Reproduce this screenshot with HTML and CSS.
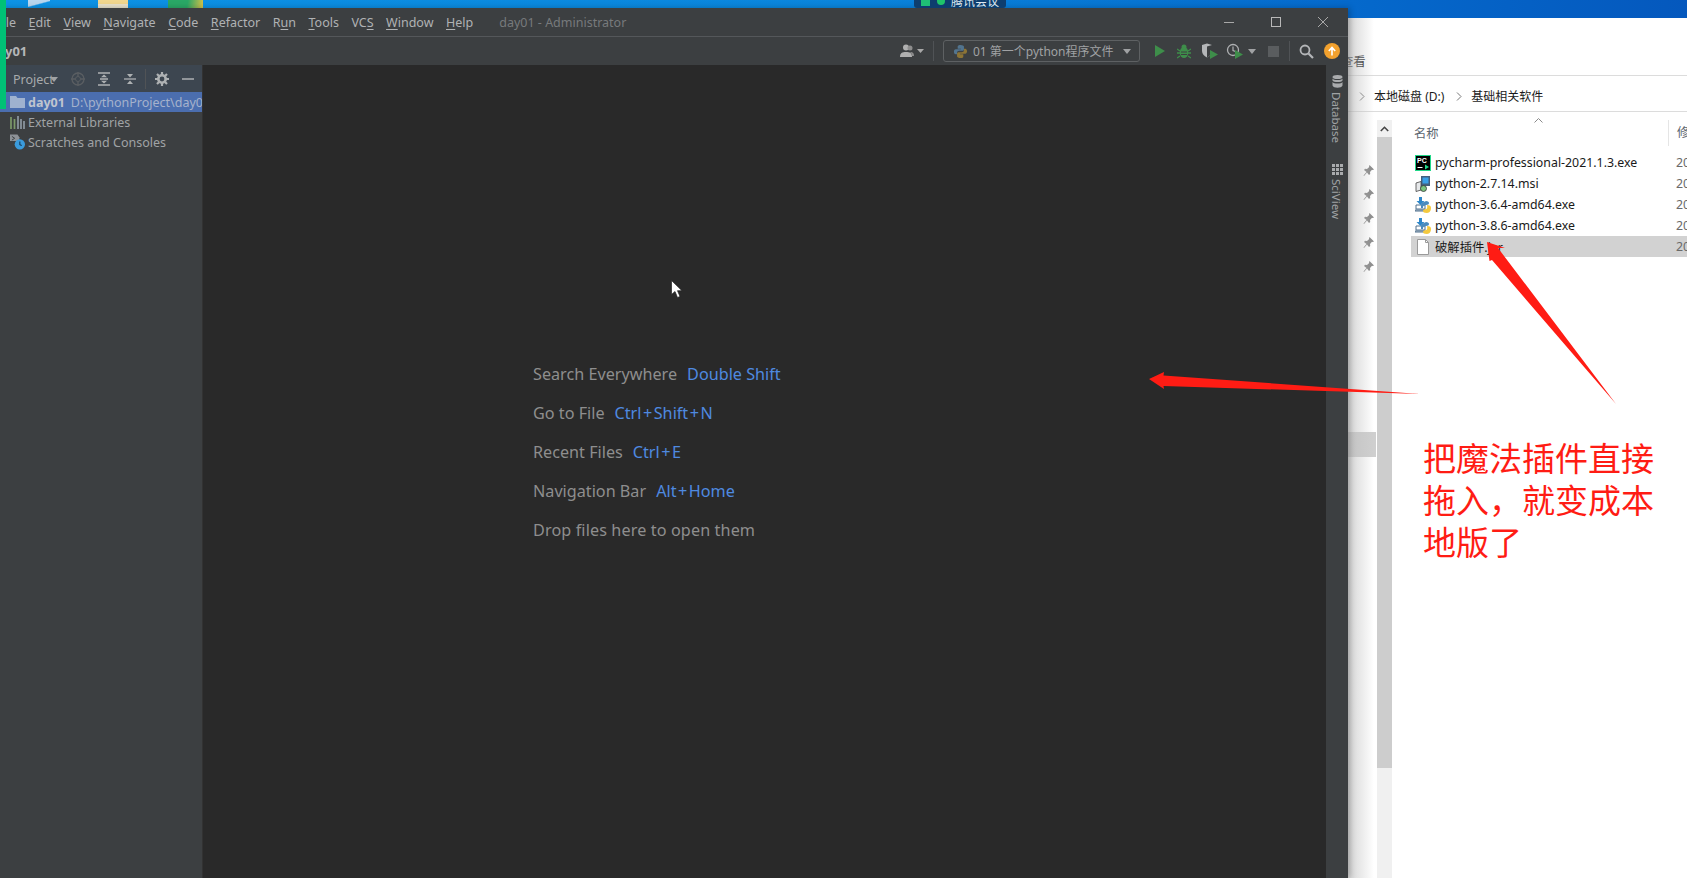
FILE: index.html
```html
<!DOCTYPE html>
<html lang="zh">
<head>
<meta charset="utf-8">
<title>day01 - Administrator</title>
<link rel="stylesheet" href="styles.css">
</head>
<body>
<div class="screen">
  <div class="deskicon di-a"></div>
  <div class="deskicon di-b"></div>
  <div class="deskicon di-c"></div>

  <div class="windows">
    <section class="ide">
      <header class="titlebar">
        <nav class="menu">
          <span>File</span><span><u>E</u>dit</span><span><u>V</u>iew</span><span><u>N</u>avigate</span><span><u>C</u>ode</span><span><u>R</u>efactor</span><span>R<u>u</u>n</span><span><u>T</u>ools</span><span>VC<u>S</u></span><span><u>W</u>indow</span><span><u>H</u>elp</span>
        </nav>
        <div class="wintitle">day01 - Administrator</div>
        <div class="winctl">
          <svg width="47" height="14" viewBox="0 0 47 14"><path d="M18 7.500h10" stroke="#a8a8a8"/></svg>
          <svg width="47" height="14" viewBox="0 0 47 14"><rect x="18.500" y="2.500" width="9" height="9" fill="none" stroke="#b8b8b8"/></svg>
          <svg width="47" height="14" viewBox="0 0 47 14"><path d="M18 2l10 10M28 2L18 12" stroke="#a8a8a8" fill="none"/></svg>
        </div>
      </header>
      <div class="toolbar">
        <div class="crumb">day01</div>
        <div class="tools">
          <svg class="t-user" width="25" height="16" viewBox="0 0 25 16"><circle cx="6" cy="4.500" r="3" fill="#b0b0b0"/><path d="M0 14c0-4 2-5 6-5s6 1 6 5z" fill="#b0b0b0"/><circle cx="10" cy="5" r="2.500" fill="#8d8d8d"/><path d="M10 9c3 0 4 1 4 4h-2c0-2-1-3-2-4z" fill="#8d8d8d"/><path d="M17 6h7l-3.500 4z" fill="#a8a8a8"/></svg>
          <i class="vsep sep-a"></i>
          <div class="runconf">
            <svg class="pyicon" width="15" height="15" viewBox="0 0 16 16"><path d="M8 1C5 1 5 2.200 5 3v2h3.500v.7H3C1.500 5.700 1 7 1 8.200S1.600 11 3 11h1.300V9.300C4.300 8 5.300 7.200 6.500 7.200H10c1 0 1.700-.7 1.700-1.700V3C11.700 1.800 10 1 8 1z" fill="#52748e"/><path d="M8 15c3 0 3-1.200 3-2v-2H7.500v-.7H13c1.500 0 2-1.300 2-2.500S14.400 5 13 5h-1.300v1.700c0 1.300-1 2.100-2.200 2.100H6c-1 0-1.700.7-1.700 1.700V13c0 1.200 1.700 2 3.700 2z" fill="#8c7436"/></svg>
            <span class="runname">01 第一个python程序文件</span>
            <i class="caret caret-run"></i>
          </div>
          <span class="tbtn t-run"><svg width="12" height="14" viewBox="0 0 12 14"><path d="M1 1l10 6-10 6z" fill="#3e8e4a"/></svg></span>
          <span class="tbtn t-debug"><svg width="14" height="15" viewBox="0 0 14 15"><ellipse cx="7" cy="8.500" rx="4.200" ry="5.500" fill="#3e8e4a"/><circle cx="7" cy="3" r="2.500" fill="#3e8e4a"/><path d="M0 5l3 2M14 5l-3 2M0 9h3M14 9h-3M0 14l3-2M14 14l-3-2" stroke="#3e8e4a" stroke-width="1.300"/><path d="M4 8h6M4 10.500h6" stroke="#3c3f41"/></svg></span>
          <span class="tbtn t-cov"><svg width="17" height="16" viewBox="0 0 17 16"><path d="M1 2l5-1.500L11 2v6c0 3-2 5-5 6.500C3 13 1 11 1 8z" fill="#b4b6b8"/><path d="M6 3.500L11 2v6c0 3-2 5-5 6.500z" fill="#3c3f41"/><path d="M9 7l8 4.500L9 16z" fill="#3e8e4a"/></svg></span>
          <span class="tbtn t-prof"><svg width="18" height="16" viewBox="0 0 18 16"><circle cx="7" cy="7" r="5.500" fill="none" stroke="#aeb0b2" stroke-width="1.300"/><path d="M7 3.500V7.500l2.500 1" fill="none" stroke="#aeb0b2" stroke-width="1.200"/><path d="M9 7l8 4.500L9 16z" fill="#3e8e4a"/></svg></span>
          <i class="caret caret-prof"></i>
          <span class="tbtn t-stop"><i class="stopbox"></i></span>
          <i class="vsep sep-b"></i>
          <span class="tbtn t-search"><svg width="15" height="15" viewBox="0 0 15 15"><circle cx="6" cy="6" r="4.500" fill="none" stroke="#b4b6b8" stroke-width="1.800"/><path d="M9.500 9.500L14 14" stroke="#b4b6b8" stroke-width="2.200"/></svg></span>
          <span class="tbtn t-update"><svg width="16" height="16" viewBox="0 0 16 16"><circle cx="8" cy="8" r="8" fill="#f2a12e"/><path d="M8 12.500V5M4.800 8L8 4.500 11.200 8" fill="none" stroke="#fff" stroke-width="1.600"/></svg></span>
        </div>
      </div>
      <div class="idebody">
        <aside class="sidebar">
          <div class="sidehead">
            <span class="projname">Project</span><i class="caret caret-proj"></i>
            <span class="hbtn h-first"><svg width="14" height="14" viewBox="0 0 14 14"><circle cx="7" cy="7" r="6" fill="none" stroke="#5a5e62" stroke-width="1.300"/><circle cx="7" cy="7" r="2.500" fill="none" stroke="#5a5e62"/><path d="M7 0v4M7 10v4M0 7h4M10 7h4" stroke="#5a5e62" stroke-width="1.300"/></svg></span>
            <span class="hbtn"><svg width="14" height="14" viewBox="0 0 14 14"><path d="M1 1h12M1 13h12M3 7h8" stroke="#aeb1b3" stroke-width="1.300"/><path d="M7 2.500l3 2.800H4zM7 11.500l3-2.800H4z" fill="#aeb1b3"/></svg></span>
            <span class="hbtn"><svg width="14" height="14" viewBox="0 0 14 14"><path d="M1 7h12" stroke="#aeb1b3" stroke-width="1.300"/><path d="M7 5.500l3-3.500H4zM7 8.500l3 3.500H4z" fill="#aeb1b3"/></svg></span>
            <i class="vsep sep-c"></i>
            <span class="hbtn"><svg width="14" height="14" viewBox="0 0 14 14"><circle cx="7" cy="7" r="3.700" fill="none" stroke="#aeb1b3" stroke-width="2.600"/><path d="M7 0v3M7 11v3M0 7h3M11 7h3M2 2l2 2M10 10l2 2M12 2l-2 2M4 10l-2 2" stroke="#aeb1b3" stroke-width="2.200"/></svg></span>
            <span class="hbtn"><svg width="14" height="14" viewBox="0 0 14 14"><path d="M1 7h12" stroke="#aeb1b3" stroke-width="1.500"/></svg></span>
          </div>
          <div class="treerow selected">
            <svg class="ticon" width="15" height="12" viewBox="0 0 15 12"><path d="M0 0h6l1.500 2H15v10H0z" fill="#9fb2cf"/></svg>
            <b class="tname">day01</b><span class="tpath">D:\pythonProject\day01</span>
          </div>
          <div class="treerow">
            <svg class="ticon" width="15" height="13" viewBox="0 0 15 13"><path d="M1 1v12" stroke="#7d9a6a" stroke-width="1.700"/><path d="M4.500 3v10" stroke="#7d9a6a" stroke-width="1.700"/><path d="M8 0v13" stroke="#8e99a3" stroke-width="1.700"/><path d="M11 3v10" stroke="#8e99a3" stroke-width="1.700"/><path d="M14 5v8" stroke="#8e99a3" stroke-width="1.700"/></svg>
            <span>External Libraries</span>
          </div>
          <div class="treerow">
            <svg class="ticon" width="16" height="16" viewBox="0 0 16 16"><path d="M0 0h8l2 3v4H0z" fill="#8d9297"/><path d="M2 2l3 2-3 2" fill="none" stroke="#3c3f41"/><circle cx="10.500" cy="10.500" r="5.500" fill="#3a9bdc"/><path d="M10.500 7.500v3.300l2 1" fill="none" stroke="#12344f" stroke-width="1.100"/></svg>
            <span>Scratches and Consoles</span>
          </div>
        </aside>
        <main class="editor">
          <p><span class="hk">Search Everywhere</span><span class="key">Double Shift</span></p>
          <p><span class="hk">Go to File</span><span class="key">Ctrl<span class="plus">+</span>Shift<span class="plus">+</span>N</span></p>
          <p><span class="hk">Recent Files</span><span class="key">Ctrl<span class="plus">+</span>E</span></p>
          <p><span class="hk">Navigation Bar</span><span class="key">Alt<span class="plus">+</span>Home</span></p>
          <p><span class="hk hk-drop">Drop files here to open them</span></p>
        </main>
        <aside class="strip">
          <svg width="11" height="13" viewBox="0 0 11 13"><ellipse cx="5.500" cy="2" rx="5" ry="2" fill="#a9abad"/><path d="M.5 3.500c1 2 9 2 10 0v2c-1 2-9 2-10 0zM.5 7c1 2 9 2 10 0v3.500c-1 3-9 3-10 0z" fill="#a9abad"/></svg>
          <span class="striptext">Database</span>
          <svg class="sci" width="11" height="11" viewBox="0 0 11 11"><path d="M0 0h3v3H0zM4 0h3v3H4zM8 0h3v3H8zM0 4h3v3H0zM4 4h3v3H4zM8 4h3v3H8zM0 8h3v3H0zM4 8h3v3H4zM8 8h3v3H8z" fill="#a9abad"/></svg>
          <span class="striptext">SciView</span>
        </aside>
      </div>
    </section>

    <section class="explorer">
      <div class="ribbon"><span>查看</span></div>
      <div class="address">
        <span class="addr-prev">此电脑</span>
        <svg class="chev" width="6" height="9" viewBox="0 0 6 9"><path d="M1 .5l4 4-4 4" fill="none" stroke="#777"/></svg>
        <span>本地磁盘 (D:)</span>
        <svg class="chev" width="6" height="9" viewBox="0 0 6 9"><path d="M1 .5l4 4-4 4" fill="none" stroke="#777"/></svg>
        <span>基础相关软件</span>
      </div>
      <div class="expbody">
        <div class="navpane">
          <div class="pin"><svg width="11" height="11" viewBox="0 0 11 11"><use href="#pin"/></svg></div>
          <div class="pin"><svg width="11" height="11" viewBox="0 0 11 11"><use href="#pin"/></svg></div>
          <div class="pin"><svg width="11" height="11" viewBox="0 0 11 11"><use href="#pin"/></svg></div>
          <div class="pin"><svg width="11" height="11" viewBox="0 0 11 11"><use href="#pin"/></svg></div>
          <div class="pin"><svg width="11" height="11" viewBox="0 0 11 11"><use href="#pin"/></svg></div>
          <div class="navsel"></div>
        </div>
        <div class="scrollbar">
          <div class="sbtn"><svg width="9" height="6" viewBox="0 0 9 6"><path d="M.8 5l3.700-3.700L8.200 5" fill="none" stroke="#444" stroke-width="1.600"/></svg></div>
          <div class="thumb"></div>
        </div>
        <div class="files">
          <svg class="sortcaret" width="9" height="5" viewBox="0 0 9 5"><path d="M.5 4.500l4-4 4 4" fill="none" stroke="#8a8a8a"/></svg>
          <div class="colhead"><span class="col-name">名称</span><span class="col-date">修</span></div>
          <div class="frow">
            <svg class="ficon" width="16" height="16" viewBox="0 0 16 16"><rect width="16" height="16" fill="#21d789"/><rect x="1" y="1" width="14" height="14" fill="#000"/><text x="2" y="8" class="pc">PC</text><path d="M2.500 12.500h5" stroke="#fff"/><path d="M10 9.500l4 2.500-4 2.500z" fill="#21d789"/></svg>
            <span class="fname">pycharm-professional-2021.1.3.exe</span><span class="fdate">20</span>
          </div>
          <div class="frow">
            <svg class="ficon" width="16" height="16" viewBox="0 0 16 16"><rect x="6" y="0" width="9" height="10" fill="#44607f"/><rect x="7.500" y="1.500" width="6" height="6" fill="#3ba0e8"/><path d="M1 7l5-1.500V14l-5 1.500z" fill="#e6e8ea" stroke="#444" stroke-width=".8"/><circle cx="8.500" cy="12.500" r="3" fill="#7bc47f" stroke="#333" stroke-width=".8"/></svg>
            <span class="fname">python-2.7.14.msi</span><span class="fdate">20</span>
          </div>
          <div class="frow">
            <svg class="ficon" width="16" height="16" viewBox="0 0 16 16"><use href="#pyinst"/></svg>
            <span class="fname">python-3.6.4-amd64.exe</span><span class="fdate">20</span>
          </div>
          <div class="frow">
            <svg class="ficon" width="16" height="16" viewBox="0 0 16 16"><use href="#pyinst"/></svg>
            <span class="fname">python-3.8.6-amd64.exe</span><span class="fdate">20</span>
          </div>
          <div class="frow frow-sel">
            <svg class="ficon" width="16" height="16" viewBox="0 0 16 16"><path d="M2.500.5h8l3 3v12h-11z" fill="#fff" stroke="#9a9a9a"/><path d="M10.500.5v3h3" fill="none" stroke="#9a9a9a"/></svg>
            <span class="fname">破解插件.jar</span><span class="fdate">20</span>
          </div>
        </div>
      </div>
    </section>
  </div>

  <div class="greenbar"></div>
  <div class="meeting"><i class="mbars"></i><i class="mdot"></i><span>腾讯会议</span></div>
  <svg class="mouse" width="12" height="18" viewBox="0 0 12 18"><path d="M.5.5v14l3.500-3 2.500 6 2.500-1-2.500-5.800H11z" fill="#fff" stroke="#222" stroke-width=".7"/></svg>
  <svg class="arrows" width="1687" height="878" viewBox="0 0 1687 878">
    <path d="M1149 379l15-7-.5 3.500 256.500 18.500-256.500-8 .5 3z" fill="#ff1c14"/>
    <path d="M1487 242l18 6-7 0 118 156-124-144-2.500 1z" fill="#ff1c14"/>
  </svg>
  <div class="note">把魔法插件直接<br>拖入，就变成本<br>地版了</div>

  <svg class="defs" width="0" height="0">
    <defs>
      <symbol id="pin" viewBox="0 0 11 11"><path d="M6.500 0L11 4.500 9.800 5 9 4.800 7 7l.2 2L6 10 4 7.500 1 11 .5 10.500 3.500 7 1 5l1-1.200 2 .2L6.200 2 6 1.200z" fill="#8a8a8a"/></symbol>
      <symbol id="pyinst" viewBox="0 0 16 16"><path d="M1 8h9v4H1zM0 13h10v1H0z" fill="none" stroke="#51708e"/><path d="M4 0h3v4h2.500L5.500 8 1.500 4H4z" fill="#2e86c8"/><path d="M11 4c2 0 3 1 3 2s-1 2-3 2-3 1-3 2v1H6V8c0-2 2-3 3-3z" fill="#4b8bbe"/><path d="M12 8c3 0 4 1 4 3s-1 5-4 5-4-1-4-2 1-2 3-2 1-4 1-4z" fill="#f4c93f"/></symbol>
    </defs>
  </svg>
</div>
</body>
</html>
```
FILE: styles.css
```css
* { box-sizing: border-box; }
html, body { margin: 0; height: 100%; overflow: hidden; }
body { font-family: "Noto Sans", "Noto Sans CJK SC", sans-serif; }

.screen {
  position: relative;
  width: 1687px;
  height: 878px;
  overflow: hidden;
  background: linear-gradient(90deg, #0d93e6 0%, #0a85dc 50%, #0569cc 80%, #0558bd 100%);
}

.deskicon { position: absolute; top: 0; height: 8px; }
.di-a { left: 28px; width: 22px; background: linear-gradient(165deg, #b9d6ee 45%, transparent 55%); }
.di-b { left: 98px; width: 30px; background: linear-gradient(#f0d68e 50%, #e8e2cc 50%); }
.di-c { left: 168px; width: 35px; background: linear-gradient(100deg, #2aa866 55%, #d8c24a 100%); }

.windows { display: flex; height: 100%; align-items: flex-start; }

/* IDE window */
.ide {
  position: relative;
  z-index: 2;
  flex: 0 0 1348px;
  height: 870px;
  margin-top: 8px;
  background: #3c3f41;
  display: flex;
  flex-direction: column;
  overflow: hidden;
  color: #a8abad;
  box-shadow: 2px 0 6px rgba(0, 0, 0, .25);
}

.titlebar {
  flex: 0 0 29px;
  display: flex;
  align-items: center;
  border-bottom: 1px solid #54575a;
  font-size: 12.5px;
}
.menu { display: flex; gap: 12.5px; margin-left: -4px; color: #b0b2b4; }
.menu u { text-underline-offset: 2px; }
.wintitle { margin-left: 26px; color: #777a7c; }
.winctl { margin-left: auto; display: flex; margin-right: 1px; }

.toolbar {
  flex: 0 0 28px;
  display: flex;
  align-items: center;
  background: #3c3f41;
}
.crumb { margin-left: -11px; font-size: 13px; font-weight: 700; color: #b4b6b8; }
.tools { margin-left: auto; display: flex; align-items: center; padding-right: 5px; }
.t-user { margin-right: 8px; }
.vsep { display: block; width: 1px; height: 20px; background: #505356; }
.sep-a { margin-right: 9px; }
.sep-b { margin: 0 5px; }
.runconf {
  width: 197px;
  height: 22px;
  display: flex;
  align-items: center;
  padding-left: 9px;
  border: 1px solid #5e6163;
  border-radius: 3px;
  margin-right: 8px;
  font-size: 12px;
  color: #a0a2a4;
}
.pyicon { flex: none; }
.runname { margin-left: 5px; white-space: nowrap; }
.caret {
  display: block;
  width: 0;
  height: 0;
  border-left: 4px solid transparent;
  border-right: 4px solid transparent;
  border-top: 5px solid #a0a2a4;
}
.caret-run { margin-left: auto; margin-right: 8px; }
.tbtn { display: flex; align-items: center; justify-content: center; width: 24px; flex: none; }
.t-cov, .t-prof { width: 26px; }
.caret-prof { margin-right: 6px; }
.t-stop, .t-search { width: 22px; }
.t-update { width: 22px; margin-left: 4px; }
.stopbox { display: block; width: 11px; height: 11px; background: #5a5d5f; }

.idebody { flex: 1; display: flex; min-height: 0; border-top: 0; }

.sidebar {
  flex: 0 0 203px;
  overflow: hidden;
  background: #3c3f41;
  font-size: 12.5px;
  border-right: 1px solid #323232;
}
.sidehead {
  height: 27px;
  display: flex;
  align-items: center;
  padding-top: 1px;
  background: #3d4650;
}
.projname { margin-left: 13px; color: #a8abad; }
.caret-proj { margin-left: -4px; }
.hbtn { display: flex; justify-content: center; width: 26px; flex: none; }
.h-first { margin-left: 7px; }
.sep-c { margin: 0 3px 0 2px; }
.treerow {
  display: flex;
  align-items: center;
  height: 20px;
  padding-left: 10px;
  white-space: nowrap;
  color: #a0a3a5;
}
.ticon { flex: none; width: 15px; margin-right: 3px; }
.selected { background: #4b6eaf; color: #c0c5cf; }
.tname { font-weight: 700; margin-right: 6px; }
.tpath { color: #a5b2cc; }

.editor { flex: 1; background: #292929; padding: 290px 0 0 330px; font-size: 16.2px; }
.editor p { margin: 0; height: 39px; line-height: 39px; white-space: nowrap; }
.hk { color: #8e8e8e; }
.hk-drop { letter-spacing: .11px; }
.key { margin-left: 10px; color: #4f8ae0; }
.plus { margin: 0 1.500px; }

.strip {
  flex: 0 0 22px;
  display: flex;
  flex-direction: column;
  align-items: center;
  padding-top: 10px;
  background: #3c3f41;
}
.striptext { writing-mode: vertical-rl; font-size: 11.5px; margin: 4px 2px 0 0; color: #a0a3a5; }
.sci { margin-top: 21px; }

/* Explorer window */
.explorer {
  position: relative;
  flex: 1;
  height: 860px;
  margin-top: 18px;
  background: #fff;
  display: flex;
  flex-direction: column;
  font-size: 12.350px;
  color: #1a1a1a;
}
.explorer::before {
  content: "";
  position: absolute;
  z-index: 1;
  top: 0;
  bottom: 0;
  left: 0;
  width: 26px;
  background: linear-gradient(90deg, rgba(190, 190, 190, .65), rgba(255, 255, 255, 0));
  pointer-events: none;
}
.ribbon {
  flex: 0 0 58px;
  padding: 36px 0 0 0;
  border-bottom: 1px solid #dcdcdc;
  line-height: 16px;
}
.ribbon span { margin-left: -7px; }
.address {
  margin-top: 5px;
  flex: 0 0 31px;
  display: flex;
  align-items: center;
  border-bottom: 1px solid #dcdcdc;
  white-space: nowrap;
  font-size: 12px;
}
.addr-prev { margin-left: -37px; }
.chev { margin: 0 9px 0 12px; }
.expbody { flex: 1; display: flex; min-height: 0; }
.navpane { flex: 0 0 29px; padding-top: 46px; }
.pin { height: 24px; display: flex; align-items: center; justify-content: flex-end; padding-right: 3px; }
.navsel { height: 25px; margin-top: 154px; margin-right: 1px; background: #cfcfcf; }
.scrollbar { flex: 0 0 15px; margin-top: 8px; background: #f0f0f0; }
.sbtn { height: 17px; display: flex; align-items: center; justify-content: center; }
.thumb { height: 631px; background: #cdcdcd; }

.files { position: relative; flex: 1; padding: 8px 0 0 19px; min-width: 0; }
.sortcaret { position: absolute; top: 6px; left: 142px; }
.colhead { display: flex; height: 26px; margin-bottom: 6px; align-items: center; color: #5c6670; }
.col-name { flex: 0 0 257px; padding-left: 3px; }
.col-date { border-left: 1px solid #e5e5e5; padding-left: 8px; height: 26px; line-height: 26px; }
.frow { display: flex; align-items: center; height: 21px; white-space: nowrap; overflow: hidden; }
.frow-sel { background: #d2d2d2; }
.ficon { flex: none; margin: 0 4px 0 4px; }
.fname { flex: 0 0 241px; }
.fdate { color: #6a6a6a; }
.pc { font: 700 7px "Liberation Sans", sans-serif; fill: #fff; }

/* Overlays */
.greenbar { position: absolute; z-index: 3; top: 0; left: 0; width: 6px; height: 109px; background: #00c176; }
.meeting {
  position: absolute;
  z-index: 3;
  top: -6px;
  left: 914px;
  width: 92px;
  height: 14px;
  display: flex;
  align-items: center;
  padding-left: 7px;
  background: #0e3e6e;
  border-radius: 0 0 3px 3px;
  font-size: 12px;
  color: #dfe8f0;
}
.mbars { display: block; width: 9px; height: 8px; margin-top: 2px; background: #1fbf75; }
.mdot { display: block; width: 8px; height: 8px; margin: 0 6px 0 7px; border-radius: 50%; background: #1fc46a; }
.mouse { position: absolute; z-index: 4; left: 671px; top: 280px; }
.arrows { position: absolute; z-index: 4; top: 0; left: 0; pointer-events: none; }
.note {
  position: absolute;
  z-index: 4;
  left: 1423px;
  top: 436px;
  font-family: "Noto Sans CJK SC", sans-serif;
  font-size: 33px;
  font-weight: 400;
  line-height: 42px;
  white-space: nowrap;
  color: #ff1c14;
}
.defs { position: absolute; }
```
